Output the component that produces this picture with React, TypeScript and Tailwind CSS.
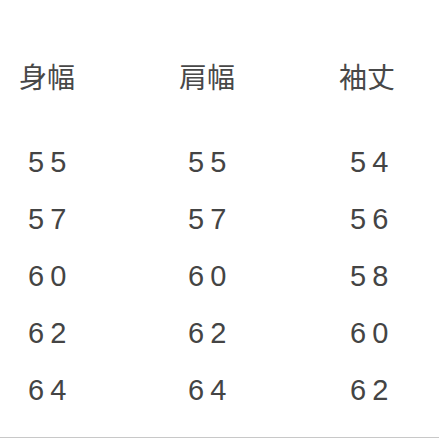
const headers = ['身幅', '肩幅', '袖丈'];

const rows = [
  ['55', '55', '54'],
  ['57', '57', '56'],
  ['60', '60', '58'],
  ['62', '62', '60'],
  ['64', '64', '62'],
];

export default function App() {
  return (
    <div className="w-[439px] h-[439px] bg-white overflow-hidden flex flex-col">
      <div
        className="mt-[58px] h-[36px] grid grid-cols-[160px_160px_1fr] items-center text-[28px] leading-[36px] text-[#484848]"
        style={{ fontFamily: '"Noto Sans CJK JP", "Noto Sans CJK SC", sans-serif' }}
      >
        {headers.map((h) => (
          <div key={h} className="pl-[19px]">
            {h}
          </div>
        ))}
      </div>
      <div className="mt-[40px] flex flex-col">
        {rows.map((row, i) => (
          <div
            key={i}
            className="h-[57px] grid grid-cols-[160px_160px_1fr] items-center text-[29px] leading-none tracking-[6px] text-[#444444]"
            style={{ fontFamily: '"Liberation Sans", Arial, sans-serif' }}
          >
            {row.map((v, j) => (
              <div key={j} className={j === 2 ? 'pl-[30px]' : 'pl-[28px]'}>
                {v}
              </div>
            ))}
          </div>
        ))}
      </div>
      <div className="mt-[18px] h-px bg-[#c8c8c8]" />
    </div>
  );
}
